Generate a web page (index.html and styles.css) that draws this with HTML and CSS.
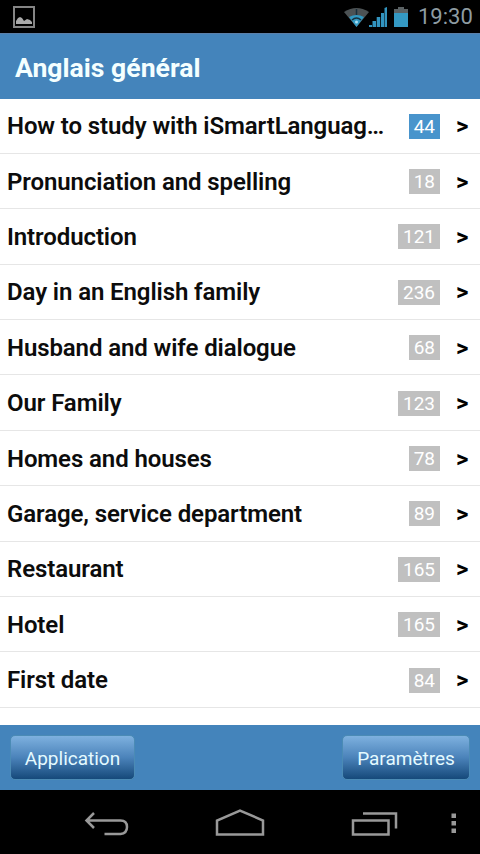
FILE: index.html
```html
<!DOCTYPE html>
<html lang="fr">
<head>
<meta charset="utf-8">
<title>Anglais général</title>
<link rel="stylesheet" href="styles.css">
</head>
<body>
<div class="status">
  <svg class="status-picture" width="24" height="24" viewBox="0 0 24 24"><rect x="2" y="2" width="20" height="20" fill="none" stroke="#858585" stroke-width="2"/><path d="M4 19v-3l2-3 2-1 2 1 2 3 3-2 3 1 2 2v2z" fill="#aaa"/></svg>
  <svg class="status-icons" width="68" height="24" viewBox="0 0 68 24"><path d="M1 7Q13.500-1 26 7L13.500 22z" fill="#4c5254"/><path d="M6 12Q13.500 8 21 12L13.500 22z" fill="#3198c1"/><path d="M9 15q4.500-4 9 0M13.500 4v6" fill="none" stroke="#182f3b" stroke-width="1.500"/><circle cx="13.500" cy="17" r="1.500" fill="#a8dff4"/><path d="M26 22v-2h3v2zM29.500 22v-6h3.500v6zM33.700 22v-10h3.500v10zM38 22v-14h3v14zM41.500 22v-19l2.500-1v20z" fill="#3294bf"/><path d="M51 4h4v-2h6v2h4v5h-14z" fill="#5b6264"/><path d="M51 8h14v14h-14z" fill="#3499c3"/></svg>
  <span class="clock">19:30</span>
</div>
<header class="header"><h1>Anglais général</h1></header>
<main class="list">
  <div class="row"><span class="title">How to study with iSmartLanguag…</span><span class="count active">44</span><span class="arrow">&gt;</span></div>
  <div class="row"><span class="title">Pronunciation and spelling</span><span class="count">18</span><span class="arrow">&gt;</span></div>
  <div class="row"><span class="title">Introduction</span><span class="count">121</span><span class="arrow">&gt;</span></div>
  <div class="row"><span class="title">Day in an English family</span><span class="count">236</span><span class="arrow">&gt;</span></div>
  <div class="row"><span class="title">Husband and wife dialogue</span><span class="count">68</span><span class="arrow">&gt;</span></div>
  <div class="row"><span class="title">Our Family</span><span class="count">123</span><span class="arrow">&gt;</span></div>
  <div class="row"><span class="title">Homes and houses</span><span class="count">78</span><span class="arrow">&gt;</span></div>
  <div class="row"><span class="title">Garage, service department</span><span class="count">89</span><span class="arrow">&gt;</span></div>
  <div class="row"><span class="title">Restaurant</span><span class="count">165</span><span class="arrow">&gt;</span></div>
  <div class="row"><span class="title">Hotel</span><span class="count">165</span><span class="arrow">&gt;</span></div>
  <div class="row"><span class="title">First date</span><span class="count">84</span><span class="arrow">&gt;</span></div>
</main>
<footer class="toolbar"><button class="button">Application</button><button class="button params">Paramètres</button></footer>
<nav class="nav">
  <svg width="480" height="64" viewBox="0 0 480 64" fill="none" stroke="#999" stroke-width="2.500"><path d="M94 23l-7.500 7.500 7.500 7.500M86.500 30.500h34q6.500 0 6.500 6.500t-6.500 7h-16"/><path d="M217 44.500v-14l23-10 23 10v14z"/><path d="M353 30.500h35.500v14h-35.500zM363 23.500h33v15"/><path d="M451.500 23.500h4.500v4.500h-4.500zM451.500 31h4.500v4.500h-4.500zM451.500 38.500h4.500v4.500h-4.500z" fill="#999" stroke="none"/></svg>
</nav>
</body>
</html>
```
FILE: styles.css
```css
* { box-sizing: border-box; }
body {
  margin: 0;
  width: 480px;
  height: 854px;
  display: flex;
  flex-direction: column;
  overflow: hidden;
  background: #fff;
  font-family: Roboto, "Liberation Sans", sans-serif;
}
.status {
  height: 33px;
  flex: none;
  display: flex;
  align-items: center;
  padding: 0 8px 0 12px;
  background: #000;
}
.status-icons { margin-left: auto; }
.clock {
  width: 54px;
  margin-left: 7px;
  color: #8e9ca2;
  font-size: 22px;
  line-height: 35px;
  text-align: right;
}
.header {
  height: 65.500px;
  flex: none;
  padding-left: 15px;
  background: #4484bb;
  border-top: 1px solid #5b7fa9;
}
h1 {
  margin: 0;
  color: #f4ffff;
  font-size: 26.600px;
  font-weight: 700;
  line-height: 67px;
}
.list { flex: 1; min-height: 0; }
.row {
  height: 55.400px;
  display: flex;
  align-items: center;
  padding: 1px 10px 0 7px;
  border-bottom: 1px solid #e6e6e6;
}
.title {
  flex: 1;
  color: #0c0c0c;
  font-size: 24px;
  font-weight: 600;
  letter-spacing: -0.100px;
  line-height: 30px;
  white-space: nowrap;
}
.count {
  height: 25px;
  padding: 0 5px;
  background: #c0c0c0;
  color: #fff;
  font-size: 19px;
  line-height: 26px;
}
.count.active { background: #4894cc; }
.arrow {
  width: 30px;
  padding-left: 16px;
  font-size: 24px;
  font-weight: 700;
  line-height: 28px;
}
.toolbar {
  height: 65.500px;
  flex: none;
  display: flex;
  justify-content: space-between;
  align-items: flex-start;
  padding: 10px 10px 0;
  background: #4484bb;
}
.button {
  width: 125px;
  height: 45px;
  padding: 2px 0 0;
  border: 1px solid #4b8bb5;
  border-radius: 5px;
  background: linear-gradient(#7eb1df, #4b83ba 50%, #15497a);
  color: #e4faff;
  font: 400 19px Roboto, "Liberation Sans", sans-serif;
}
.params { width: 128px; }
.nav { height: 64px; flex: none; background: #000; }
.nav svg { display: block; }
```
